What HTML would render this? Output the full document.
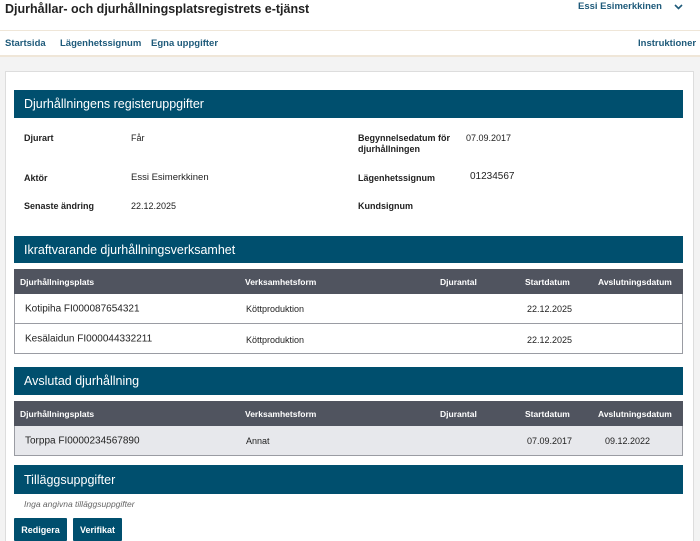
<!DOCTYPE html>
<html><head><meta charset="utf-8"><style>
*{margin:0;padding:0;box-sizing:border-box}
html,body{width:700px;height:541px;overflow:hidden}
body{background:#f3f3f3;font-family:"Liberation Sans","DejaVu Sans",sans-serif;position:relative;color:#222}
.a{position:absolute;white-space:nowrap}
.top{left:0;top:0;width:700px;height:30px;background:#fff}
.nav{left:0;top:30px;width:700px;height:27px;background:#fff;border-top:1px solid #efe6d8;border-bottom:2px solid #efe6d8}
.lk{color:#1e5a7a;font-size:9.5px;font-weight:bold}
.card{left:5px;top:71px;width:689px;height:470px;background:#fff;border:1px solid #ddd;border-bottom:none}
.hd{left:14px;width:669px;background:#004f6e;color:#fff;font-size:12.5px;padding-left:10px;display:flex;align-items:center}
.b{font-weight:bold;font-size:9px}
.v{font-size:9px}
.th{left:14px;width:669px;height:25px;background:#50545f;color:#fff;font-size:8.5px;font-weight:bold}
.tr{left:14px;width:669px;height:30px;border:1px solid #9a9ca3;border-top:none;font-size:9px;background:#fff}
.tr span,.th span{position:absolute;top:50%;transform:translateY(-50%)}
.btn{top:518px;height:23px;background:#004f6e;color:#fff;font-size:9px;font-weight:bold;display:flex;align-items:center;justify-content:center;border-radius:1px}
</style></head><body>
<div class="a top"></div>
<div class="a" style="left:5px;top:2px;font-size:12.5px;font-weight:bold;color:#222">Djurhållar- och djurhållningsplatsregistrets e-tjänst</div>
<div class="a lk" style="left:578px;top:1px">Essi Esimerkkinen</div>
<svg class="a" style="left:674px;top:4px" width="9" height="6" viewBox="0 0 9 6"><path d="M1 1l3.5 3.5L8 1" fill="none" stroke="#1e5a7a" stroke-width="1.6"/></svg>
<div class="a nav"></div>
<div class="a lk" style="left:5px;top:38px">Startsida</div>
<div class="a lk" style="left:60px;top:38px">Lägenhetssignum</div>
<div class="a lk" style="left:151px;top:38px">Egna uppgifter</div>
<div class="a lk" style="left:638px;top:38px">Instruktioner</div>
<div class="a card"></div>
<div class="a hd" style="top:90px;height:28px">Djurhållningens registeruppgifter</div>
<div class="a b" style="left:24px;top:133px">Djurart</div><div class="a v" style="left:131px;top:133px">Får</div>
<div class="a b" style="left:358px;top:133px;line-height:11px">Begynnelsedatum för<br>djurhållningen</div><div class="a v" style="left:466px;top:133px">07.09.2017</div>
<div class="a b" style="left:24px;top:173px">Aktör</div><div class="a v" style="left:131px;top:172px;font-size:9.5px">Essi Esimerkkinen</div>
<div class="a b" style="left:358px;top:173px">Lägenhetssignum</div><div class="a v" style="left:470px;top:171px;font-size:10px">01234567</div>
<div class="a b" style="left:24px;top:201px">Senaste ändring</div><div class="a v" style="left:131px;top:201px">22.12.2025</div>
<div class="a b" style="left:358px;top:201px">Kundsignum</div>
<div class="a hd" style="top:236px;height:27px">Ikraftvarande djurhållningsverksamhet</div>
<div class="a th" style="top:269px"><span style="left:6px">Djurhållningsplats</span><span style="left:231px">Verksamhetsform</span><span style="left:426px">Djurantal</span><span style="left:511px">Startdatum</span><span style="left:584px">Avslutningsdatum</span></div>
<div class="a tr" style="top:294px"><span style="left:10px;font-size:10px">Kotipiha FI000087654321</span><span style="left:231px">Köttproduktion</span><span style="left:512px">22.12.2025</span></div>
<div class="a tr" style="top:324px"><span style="left:10px;font-size:10px">Kesälaidun FI000044332211</span><span style="left:231px;top:55%">Köttproduktion</span><span style="left:512px;top:55%">22.12.2025</span></div>
<div class="a hd" style="top:367px;height:28px">Avslutad djurhållning</div>
<div class="a th" style="top:401px"><span style="left:6px">Djurhållningsplats</span><span style="left:231px">Verksamhetsform</span><span style="left:426px">Djurantal</span><span style="left:511px">Startdatum</span><span style="left:584px">Avslutningsdatum</span></div>
<div class="a tr" style="top:426px;background:#e7e8ec"><span style="left:10px;font-size:10px">Torppa FI0000234567890</span><span style="left:231px">Annat</span><span style="left:512px">07.09.2017</span><span style="left:590px">09.12.2022</span></div>
<div class="a hd" style="top:465px;height:29px">Tilläggsuppgifter</div>
<div class="a" style="left:24px;top:499px;font-size:8.5px;font-style:italic;color:#666">Inga angivna tilläggsuppgifter</div>
<div class="a btn" style="left:14px;width:53px">Redigera</div>
<div class="a btn" style="left:73px;width:49px">Verifikat</div>
</body></html>
